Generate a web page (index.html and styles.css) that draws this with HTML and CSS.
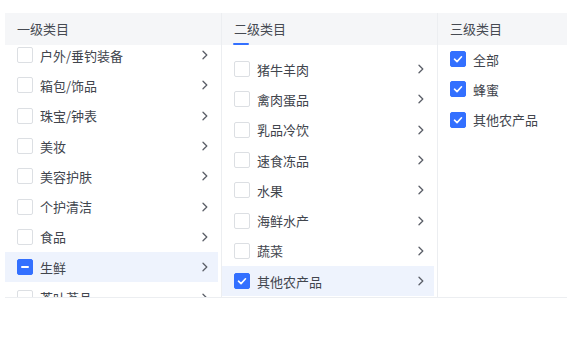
FILE: index.html
```html
<!DOCTYPE html>
<html lang="zh-CN">
<head>
<meta charset="utf-8">
<title>类目选择</title>
<link rel="stylesheet" href="styles.css">
</head>
<body>
<div class="cascader">
  <section class="col col-1">
    <div class="col-head">一级类目</div>
    <div class="col-body">
      <ul class="list list-scrolled">
        <li class="row"><span class="cb"></span><span class="label">户外/垂钓装备</span><svg class="arrow" viewBox="0 0 6 10"><path d="M1 1.2 L4.8 5 L1 8.8"/></svg></li>
        <li class="row"><span class="cb"></span><span class="label">箱包/饰品</span><svg class="arrow" viewBox="0 0 6 10"><path d="M1 1.2 L4.8 5 L1 8.8"/></svg></li>
        <li class="row"><span class="cb"></span><span class="label">珠宝/钟表</span><svg class="arrow" viewBox="0 0 6 10"><path d="M1 1.2 L4.8 5 L1 8.8"/></svg></li>
        <li class="row"><span class="cb"></span><span class="label">美妆</span><svg class="arrow" viewBox="0 0 6 10"><path d="M1 1.2 L4.8 5 L1 8.8"/></svg></li>
        <li class="row"><span class="cb"></span><span class="label">美容护肤</span><svg class="arrow" viewBox="0 0 6 10"><path d="M1 1.2 L4.8 5 L1 8.8"/></svg></li>
        <li class="row"><span class="cb"></span><span class="label">个护清洁</span><svg class="arrow" viewBox="0 0 6 10"><path d="M1 1.2 L4.8 5 L1 8.8"/></svg></li>
        <li class="row"><span class="cb"></span><span class="label">食品</span><svg class="arrow" viewBox="0 0 6 10"><path d="M1 1.2 L4.8 5 L1 8.8"/></svg></li>
        <li class="row active"><span class="cb cb-half"></span><span class="label">生鲜</span><svg class="arrow" viewBox="0 0 6 10"><path d="M1 1.2 L4.8 5 L1 8.8"/></svg></li>
        <li class="row"><span class="cb"></span><span class="label">茶叶茗品</span><svg class="arrow" viewBox="0 0 6 10"><path d="M1 1.2 L4.8 5 L1 8.8"/></svg></li>
      </ul>
    </div>
  </section>
  <section class="col col-2">
    <div class="col-head col-head-mark">二级类目</div>
    <div class="col-body col-body-pad">
      <ul class="list">
        <li class="row"><span class="cb"></span><span class="label">猪牛羊肉</span><svg class="arrow" viewBox="0 0 6 10"><path d="M1 1.2 L4.8 5 L1 8.8"/></svg></li>
        <li class="row"><span class="cb"></span><span class="label">禽肉蛋品</span><svg class="arrow" viewBox="0 0 6 10"><path d="M1 1.2 L4.8 5 L1 8.8"/></svg></li>
        <li class="row"><span class="cb"></span><span class="label">乳品冷饮</span><svg class="arrow" viewBox="0 0 6 10"><path d="M1 1.2 L4.8 5 L1 8.8"/></svg></li>
        <li class="row"><span class="cb"></span><span class="label">速食冻品</span><svg class="arrow" viewBox="0 0 6 10"><path d="M1 1.2 L4.8 5 L1 8.8"/></svg></li>
        <li class="row"><span class="cb"></span><span class="label">水果</span><svg class="arrow" viewBox="0 0 6 10"><path d="M1 1.2 L4.8 5 L1 8.8"/></svg></li>
        <li class="row"><span class="cb"></span><span class="label">海鲜水产</span><svg class="arrow" viewBox="0 0 6 10"><path d="M1 1.2 L4.8 5 L1 8.8"/></svg></li>
        <li class="row"><span class="cb"></span><span class="label">蔬菜</span><svg class="arrow" viewBox="0 0 6 10"><path d="M1 1.2 L4.8 5 L1 8.8"/></svg></li>
        <li class="row active"><span class="cb cb-on"><svg viewBox="0 0 16 16"><path d="M4 8.2 L6.9 11 L12 5.4"/></svg></span><span class="label">其他农产品</span><svg class="arrow" viewBox="0 0 6 10"><path d="M1 1.2 L4.8 5 L1 8.8"/></svg></li>
      </ul>
    </div>
  </section>
  <section class="col col-3">
    <div class="col-head">三级类目</div>
    <div class="col-body">
      <ul class="list list-up">
        <li class="row"><span class="cb cb-on"><svg viewBox="0 0 16 16"><path d="M4 8.2 L6.9 11 L12 5.4"/></svg></span><span class="label">全部</span></li>
        <li class="row"><span class="cb cb-on"><svg viewBox="0 0 16 16"><path d="M4 8.2 L6.9 11 L12 5.4"/></svg></span><span class="label">蜂蜜</span></li>
        <li class="row"><span class="cb cb-on"><svg viewBox="0 0 16 16"><path d="M4 8.2 L6.9 11 L12 5.4"/></svg></span><span class="label">其他农产品</span></li>
      </ul>
    </div>
  </section>
</div>
</body>
</html>
```

FILE: styles.css
```css
html, body {
  margin: 0;
  padding: 0;
  background: #ffffff;
  overflow: hidden;
}

body {
  font-family: "Noto Sans CJK SC", "Noto Sans", sans-serif;
  font-size: 13px;
  color: #41454d;
}

.cascader {
  display: flex;
  width: 760px;
  height: 284px;
  margin: 13px 0 0 5px;
  border-bottom: 1px solid #eceef1;
}

.col {
  display: flex;
  flex-direction: column;
  flex: none;
  min-height: 0;
}

.col-1 { width: 216px; }
.col-2 { width: 216px; border-left: 1px solid #eceef1; box-sizing: border-box; }
.col-3 { flex: 1; border-left: 1px solid #eceef1; }

.col-head {
  position: relative;
  flex: none;
  height: 32px;
  line-height: 32px;
  padding-left: 12px;
  background: #f5f6f8;
  color: #464a52;
  font-size: 13px;
}

.col-head-mark::after {
  content: "";
  position: absolute;
  left: 11px;
  bottom: 0;
  width: 16px;
  height: 2px;
  background: #3370ff;
  border-radius: 1px;
}

.col-body {
  flex: 1;
  min-height: 0;
  overflow: hidden;
  padding-right: 3px;
}

.col-body-pad {
  padding-top: 9px;
}

.list {
  list-style: none;
  margin: 0;
  padding: 0;
}

.list-scrolled {
  margin-top: -5px;
}

.list-up {
  margin-top: -1px;
}

.row {
  display: flex;
  align-items: center;
  height: 30.3px;
  padding: 0 10px 0 12px;
}

.row.active {
  background: #eef3fd;
}

.cb {
  flex: none;
  box-sizing: border-box;
  width: 16px;
  height: 16px;
  border: 1px solid #dcdfe3;
  border-radius: 2px;
  background: #ffffff;
  display: flex;
  align-items: center;
  justify-content: center;
}

.cb-on, .cb-half {
  background: #3370ff;
  border-color: #3370ff;
}

.cb-on svg {
  width: 16px;
  height: 16px;
  fill: none;
  stroke: #ffffff;
  stroke-width: 1.8;
  stroke-linecap: round;
  stroke-linejoin: round;
}

.cb-half::before {
  content: "";
  width: 8px;
  height: 2px;
  background: #ffffff;
  border-radius: 1px;
}

.label {
  flex: 1;
  margin-left: 7px;
  white-space: nowrap;
  color: #41454d;
}

.arrow {
  flex: none;
  width: 6px;
  height: 10px;
  fill: none;
  stroke: #5b5f68;
  stroke-width: 1.3;
  stroke-linecap: round;
  stroke-linejoin: round;
}
```
